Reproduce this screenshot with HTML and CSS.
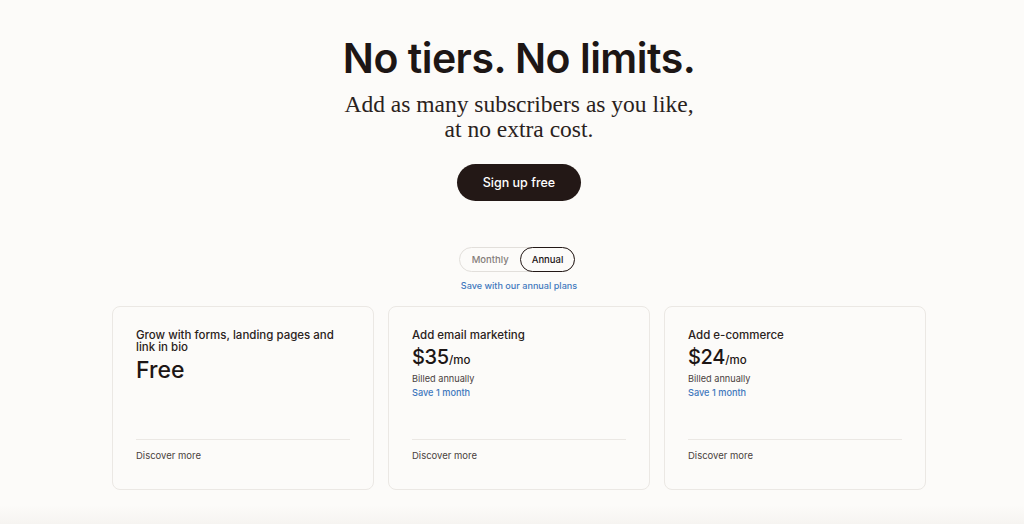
FILE: index.html
```html
<!DOCTYPE html>
<html lang="en">
<head>
  <meta charset="UTF-8">
  <meta name="viewport" content="width=device-width, initial-scale=1.0">
  <title>Pricing</title>
  <link rel="stylesheet" href="styles.css">
</head>
<body>
  <div class="page">
    <!-- Hero -->
    <div class="hero">
      <h1>No tiers. No limits.</h1>
      <p class="lead">Add as many subscribers as you like,<br>at no extra cost.</p>
      <button class="signup">Sign up free</button>
    </div>

    <!-- Billing toggle -->
    <div class="billing">
      <div class="toggle">
        <span class="toggle-opt">Monthly</span>
        <span class="toggle-opt active">Annual</span>
      </div>
      <a class="save-link">Save with our annual plans</a>
    </div>

    <!-- Plans -->
    <div class="plans">
      <div class="plan">
        <div class="plan-title">Grow with forms, landing pages and link in bio</div>
        <div class="plan-price free">Free</div>
        <div class="plan-foot">Discover more</div>
      </div>
      <div class="plan">
        <div class="plan-title">Add email marketing</div>
        <div class="plan-price">$35<span class="per">/mo</span></div>
        <div class="plan-note">Billed annually</div>
        <div class="plan-save">Save 1 month</div>
        <div class="plan-foot">Discover more</div>
      </div>
      <div class="plan">
        <div class="plan-title">Add e-commerce</div>
        <div class="plan-price">$24<span class="per">/mo</span></div>
        <div class="plan-note">Billed annually</div>
        <div class="plan-save">Save 1 month</div>
        <div class="plan-foot">Discover more</div>
      </div>
    </div>
  </div>
</body>
</html>
```

FILE: styles.css
```css
/* General */
body {
  margin: 0;
  padding: 0;
  background-color: #fcfbf9;
  color: #221a18;
  font-family: Inter, "Noto Sans", sans-serif;
  min-height: 100vh;
  background-image: linear-gradient(to bottom, #fcfbf9 505px, #f6f4f1 524px);
}

.page {
  display: flex;
  flex-direction: column;
  align-items: center;
  padding-left: 14px;
  padding-top: 32px;
}

/* Hero */
.hero {
  display: flex;
  flex-direction: column;
  align-items: center;
}

h1 {
  margin: 0;
  font-size: 41px;
  line-height: 52px;
  font-weight: 600;
  letter-spacing: -0.5px;
  color: #1d1615;
}

.lead {
  margin: 8px 0 0;
  font-family: "Liberation Serif", serif;
  font-size: 23.5px;
  line-height: 25px;
  text-align: center;
  color: #2a2220;
}

.signup {
  margin-top: 22px;
  width: 124px;
  height: 37px;
  border: none;
  border-radius: 20px;
  background-color: #231816;
  color: #fff;
  font-family: inherit;
  font-size: 12.5px;
  font-weight: 500;
  cursor: pointer;
}

/* Billing toggle */
.billing {
  margin-top: 46px;
  display: flex;
  flex-direction: column;
  align-items: center;
}

.toggle {
  display: flex;
  border: 1px solid #e2dfdb;
  border-radius: 14px;
  height: 25px;
  box-sizing: border-box;
  align-items: stretch;
  margin-right: 4px;
}

.toggle-opt {
  display: flex;
  align-items: center;
  padding: 0 11px 0 12px;
  font-size: 9.5px;
  font-weight: 500;
  color: #857e7b;
}

.toggle-opt.active {
  margin: -1px -1px -1px 0;
  border: 1.5px solid #231816;
  border-radius: 14px;
  color: #1d1615;
  padding: 0 11px;
}

.save-link {
  margin-top: 8px;
  font-size: 9.1px;
  font-weight: 500;
  color: #3f78bd;
}

/* Plans */
.plans {
  margin-top: 15px;
  display: grid;
  grid-template-columns: repeat(3, 262px);
  gap: 14px;
}

.plan {
  height: 184px;
  box-sizing: border-box;
  border: 1px solid #ebe8e4;
  border-radius: 8px;
  background-color: #fcfbf9;
  padding: 22px 23px 27px;
  display: flex;
  flex-direction: column;
}

.plan-title {
  font-size: 11.5px;
  line-height: 12px;
  font-weight: 500;
  color: #2a2220;
  padding-right: 10px;
}

.plan-price {
  margin-top: 3px;
  font-size: 20px;
  line-height: 26px;
  font-weight: 500;
  letter-spacing: -0.3px;
  color: #1d1615;
}

.plan-price.free {
  margin-top: 4px;
  font-size: 23px;
  letter-spacing: 0;
}

.per {
  font-size: 11.5px;
  letter-spacing: 0;
}

.plan-note {
  margin-top: 0;
  font-size: 9.2px;
  line-height: 12px;
  color: #4a4240;
}

.plan-save {
  margin-top: 2px;
  font-size: 9.2px;
  line-height: 12px;
  font-weight: 500;
  color: #3f78bd;
}

.plan-foot {
  margin-top: auto;
  border-top: 1px solid #ebe8e4;
  padding-top: 10px;
  font-size: 9.5px;
  line-height: 12px;
  color: #4a4240;
}
```
